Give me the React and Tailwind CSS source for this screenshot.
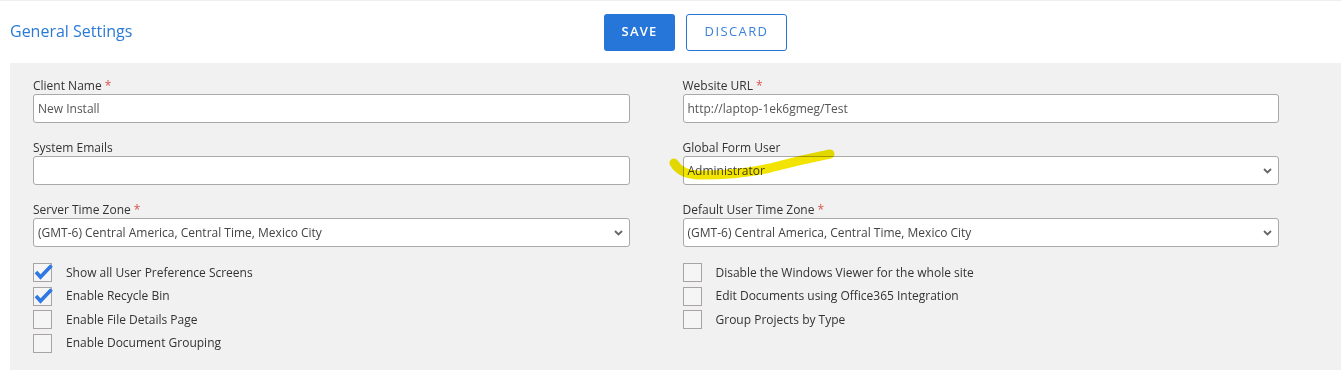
import React from "react";

const font = { fontFamily: '"Open Sans", "Noto Sans", sans-serif' };

function Label({ text, required }) {
  return (
    <div className="h-[20px] pt-[3px] leading-[17px] text-[12px] text-[#333]">
      {text}
      {required && <span className="text-[#d9534f] ml-[3px]">*</span>}
    </div>
  );
}

function TextInput({ value }) {
  return (
    <div className="h-[29px] bg-white border border-[#a9a9a9] rounded-[3px] flex items-center pl-[4px] text-[12px] text-[#555]">
      {value}
    </div>
  );
}

function Select({ value }) {
  return (
    <div className="h-[29px] bg-white border border-[#a9a9a9] rounded-[3px] flex items-center pl-[4px] pr-[6px] text-[12px] text-[#444]">
      <span className="flex-1">{value}</span>
      <svg width="9" height="6" viewBox="0 0 9 6" className="shrink-0">
        <polyline points="1,1 4.5,4.5 8,1" fill="none" stroke="#666" strokeWidth="1.8" />
      </svg>
    </div>
  );
}

function Field({ label, required, children }) {
  return (
    <div className="flex flex-col">
      <Label text={label} required={required} />
      {children}
    </div>
  );
}

function Checkbox({ checked, label }) {
  return (
    <div className="flex items-center h-[19px]">
      <div className="relative w-[19px] h-[19px] border border-[#a8a4a4] bg-[#f5f5f5] shrink-0">
        {checked && (
          <svg width="21" height="19" viewBox="0 0 21 19" className="absolute left-[0px] top-[-1px]">
            <polyline
              points="2,9 6.5,14 17.5,2.5"
              fill="none"
              stroke="#2d78e4"
              strokeWidth="3.6"
              strokeLinejoin="miter"
            />
          </svg>
        )}
      </div>
      <span className="ml-[14px] text-[12px] text-[#333]">{label}</span>
    </div>
  );
}

export default function App() {
  return (
    <div className="w-[1341px] h-[377px] bg-white relative overflow-hidden" style={font}>
      <div className="h-px bg-[#eeeeee]" />
      <div className="h-[62px] flex items-center">
        <div className="w-[604px] pl-[10px] text-[16px] text-[#2a7ad6] pb-[2px]">General Settings</div>
        <button className="w-[71px] h-[37px] rounded-[3px] bg-[#2675d9] text-white text-[13px] font-semibold tracking-[1.2px]">
          SAVE
        </button>
        <button className="ml-[11px] w-[101px] h-[37px] rounded-[3px] border border-[#2675d9] bg-white text-[#3b82d9] text-[13px] tracking-[1.4px]">
          DISCARD
        </button>
      </div>
      <div className="ml-[10px] h-[307px] bg-[#f0f1f0] pl-[23px] pr-[62px] pt-[11px]">
        <div className="grid grid-cols-2 gap-x-[53px] gap-y-[13px]">
          <Field label="Client Name" required>
            <TextInput value="New Install" />
          </Field>
          <Field label="Website URL" required>
            <TextInput value="http://laptop-1ek6gmeg/Test" />
          </Field>
          <Field label="System Emails">
            <TextInput value="" />
          </Field>
          <Field label="Global Form User">
            <Select value="Administrator" />
          </Field>
          <Field label="Server Time Zone" required>
            <Select value="(GMT-6) Central America, Central Time, Mexico City" />
          </Field>
          <Field label="Default User Time Zone" required>
            <Select value="(GMT-6) Central America, Central Time, Mexico City" />
          </Field>
        </div>
        <div className="grid grid-cols-2 gap-x-[53px] mt-[16px]">
          <div className="flex flex-col gap-[4.5px]">
            <Checkbox checked label="Show all User Preference Screens" />
            <Checkbox checked label="Enable Recycle Bin" />
            <Checkbox label="Enable File Details Page" />
            <Checkbox label="Enable Document Grouping" />
          </div>
          <div className="flex flex-col gap-[4.5px]">
            <Checkbox label="Disable the Windows Viewer for the whole site" />
            <Checkbox label="Edit Documents using Office365 Integration" />
            <Checkbox label="Group Projects by Type" />
          </div>
        </div>
      </div>
      <svg
        className="absolute left-0 top-0 pointer-events-none mix-blend-multiply"
        width="1341"
        height="377"
        viewBox="0 0 1341 377"
      >
        <path
          d="M674 163 Q681 175 700 175 Q740 175 770 168 Q800 160 830 154"
          fill="none"
          stroke="#f2e400"
          strokeWidth="9"
          strokeLinecap="round"
        />
      </svg>
    </div>
  );
}
